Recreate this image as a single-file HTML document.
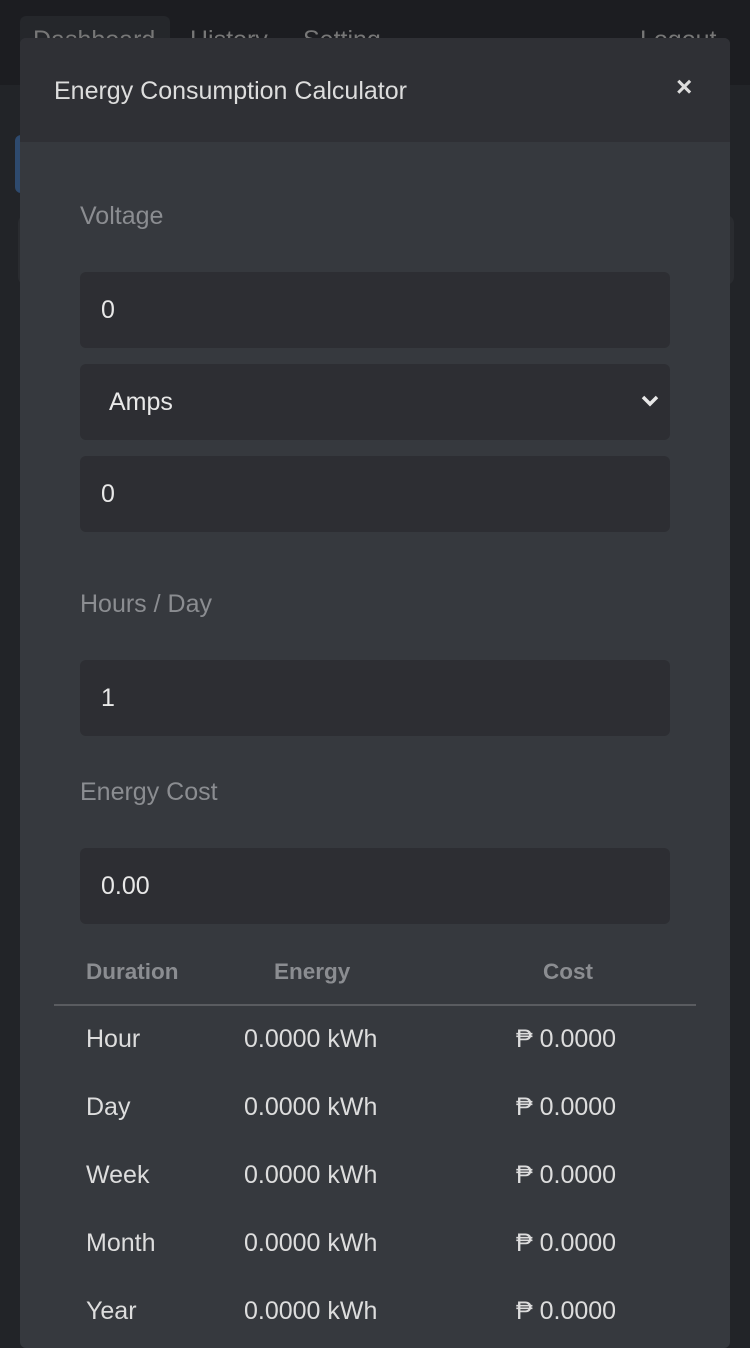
<!DOCTYPE html>
<html><head><meta charset="utf-8"><style>
*{box-sizing:border-box;margin:0;padding:0}
body{width:750px;height:1334px;overflow:hidden;background:#222428;font-family:"Liberation Sans",sans-serif;position:relative}
.top{position:absolute;left:0;top:0;width:750px;height:85px;background:#1c1d21}
.tab{position:absolute;left:20px;top:16px;width:150px;height:60px;background:#25272b;border-radius:6px}
.nav{position:absolute;top:26px;font-size:25px;color:#777;}
.blue{position:absolute;left:15px;top:135px;width:20px;height:58px;background:#2e4a6e;border-radius:6px}
.card{position:absolute;left:18px;top:215px;width:716px;height:70px;background:#2a2c30;border-radius:8px}
.modal{position:absolute;left:20px;top:38px;width:710px;height:1310px;background:#36393e;border-radius:6px;overflow:hidden}
.mh{height:104px;background:#2f3035;position:relative}
.mh h1{position:absolute;left:34px;top:39px;font-size:25px;font-weight:normal;color:#ddd}
.x{position:absolute;left:656px;top:33px;font-size:28px;font-weight:bold;color:#ddd}
.lbl{position:absolute;left:60px;font-size:25px;color:#8b8d91}
.inp{position:absolute;left:60px;width:590px;height:76px;background:#2d2e33;border-radius:6px;color:#e8e8e8;font-size:25px;padding-left:21px;line-height:76px}
.th{position:absolute;top:921px;font-size:22.5px;font-weight:bold;color:#8b8d91}
.line{position:absolute;left:34px;top:966px;width:642px;height:2px;background:#5a5c60}
.r{position:absolute;font-size:25px;color:#ddd}
</style></head><body>
<div class="top"></div><div class="tab"></div>
<div class="nav" style="left:33px">Dashboard</div>
<div class="nav" style="left:190px">History</div>
<div class="nav" style="left:303px">Setting</div>
<div class="nav" style="left:640px">Logout</div>
<div class="blue"></div><div class="card"></div>
<div class="modal">
<div class="mh"><h1>Energy Consumption Calculator</h1><div class="x">×</div></div>
<div class="lbl" style="top:164px">Voltage</div>
<div class="inp" style="top:234px">0</div>
<div class="inp" style="top:326px;padding-left:29px">Amps<svg style="position:absolute;right:10px;top:30px" width="20" height="14" viewBox="0 0 20 14"><path d="M3 3l7 7 7-7" stroke="#e8e8e8" stroke-width="3.5" fill="none"/></svg></div>
<div class="inp" style="top:418px">0</div>
<div class="lbl" style="top:552px">Hours / Day</div>
<div class="inp" style="top:622px">1</div>
<div class="lbl" style="top:740px">Energy Cost</div>
<div class="inp" style="top:810px">0.00</div>
<div class="th" style="left:66px">Duration</div>
<div class="th" style="left:254px">Energy</div>
<div class="th" style="left:523px">Cost</div>
<div class="line"></div>
<div class="r" style="left:66px;top:987px">Hour</div><div class="r" style="left:224px;top:987px">0.0000 kWh</div><div class="r" style="left:496px;top:987px">₱ 0.0000</div>
<div class="r" style="left:66px;top:1055px">Day</div><div class="r" style="left:224px;top:1055px">0.0000 kWh</div><div class="r" style="left:496px;top:1055px">₱ 0.0000</div>
<div class="r" style="left:66px;top:1123px">Week</div><div class="r" style="left:224px;top:1123px">0.0000 kWh</div><div class="r" style="left:496px;top:1123px">₱ 0.0000</div>
<div class="r" style="left:66px;top:1191px">Month</div><div class="r" style="left:224px;top:1191px">0.0000 kWh</div><div class="r" style="left:496px;top:1191px">₱ 0.0000</div>
<div class="r" style="left:66px;top:1259px">Year</div><div class="r" style="left:224px;top:1259px">0.0000 kWh</div><div class="r" style="left:496px;top:1259px">₱ 0.0000</div>
</div>
</body></html>
